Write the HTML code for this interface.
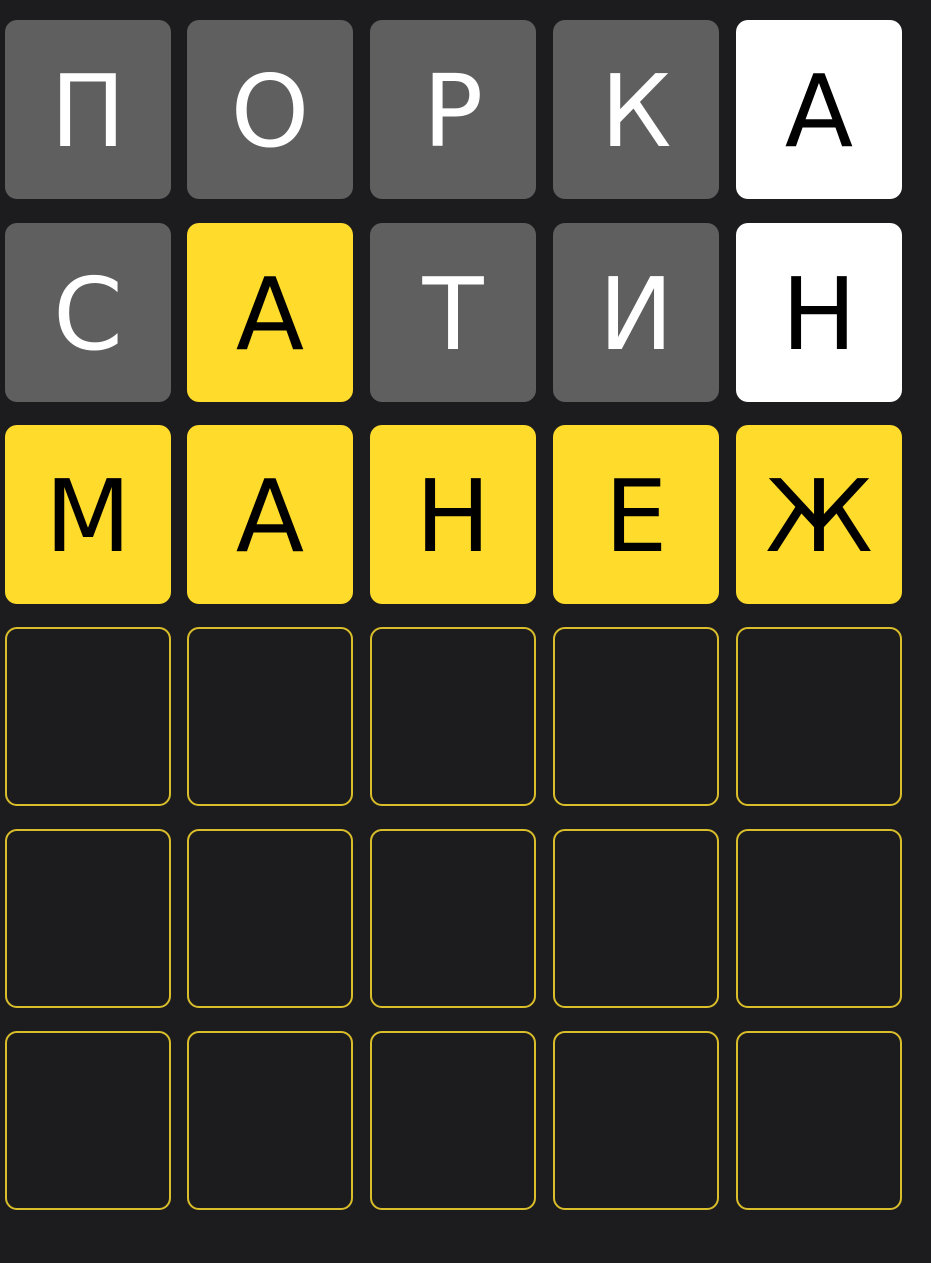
<!DOCTYPE html>
<html><head><meta charset="utf-8"><style>
html,body{margin:0;padding:0;background:#1c1c1e;width:931px;height:1263px;overflow:hidden}
.t{position:absolute;width:166px;height:179px;border-radius:12px;box-sizing:border-box;display:flex;align-items:center;justify-content:center;font-family:"DejaVu Sans","Liberation Sans",sans-serif;font-size:100px;line-height:1;padding-top:4px}
.g{background:#5f5f5f;color:#fff}
.w{background:#fff;color:#000}
.y{background:#ffdb2b;color:#000}
.e{border:2px solid #d9bd2a;background:#1c1c1e}
</style></head><body>
<div id="b"></div>
<script>
var rows=[["П","g"],["О","g"],["Р","g"],["К","g"],["А","w"],["С","g"],["А","y"],["Т","g"],["И","g"],["Н","w"],["М","y"],["А","y"],["Н","y"],["Е","y"],["Ж","y"]];
var xs=[5,187,370,553,736],ys=[20,223,425,627,829,1031],h="";
for(var r=0;r<6;r++)for(var c=0;c<5;c++){var i=r*5+c,d=rows[i];
h+='<div class="t '+(d?d[1]:'e')+'" style="left:'+xs[c]+'px;top:'+ys[r]+'px">'+(d?d[0]:'')+'</div>';}
document.getElementById('b').innerHTML=h;
</script>
</body></html>
